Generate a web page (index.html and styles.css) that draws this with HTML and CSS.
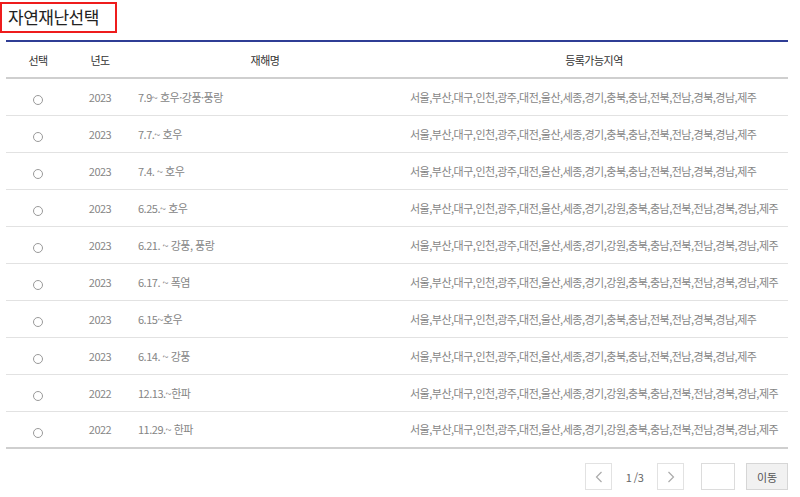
FILE: index.html
```html
<!DOCTYPE html>
<html lang="ko">
<head>
<meta charset="utf-8">
<link rel="stylesheet" href="styles.css">
</head>
<body>
<div class="page">
  <h2 class="title">자연재난선택</h2>
  <table class="grid">
    <colgroup>
      <col class="c-sel"><col class="c-year"><col class="c-name"><col class="c-area">
    </colgroup>
    <thead>
      <tr><th>선택</th><th>년도</th><th>재해명</th><th>등록가능지역</th></tr>
    </thead>
    <tbody>
      <tr><td><span class="radio"></span></td><td>2023</td><td class="name">7.9~ 호우·강풍·풍랑</td><td class="area">서울,부산,대구,인천,광주,대전,울산,세종,경기,충북,충남,전북,전남,경북,경남,제주</td></tr>
      <tr><td><span class="radio"></span></td><td>2023</td><td class="name">7.7.~ 호우</td><td class="area">서울,부산,대구,인천,광주,대전,울산,세종,경기,충북,충남,전북,전남,경북,경남,제주</td></tr>
      <tr><td><span class="radio"></span></td><td>2023</td><td class="name">7.4. ~ 호우</td><td class="area">서울,부산,대구,인천,광주,대전,울산,세종,경기,충북,충남,전북,전남,경북,경남,제주</td></tr>
      <tr><td><span class="radio"></span></td><td>2023</td><td class="name">6.25.~ 호우</td><td class="area">서울,부산,대구,인천,광주,대전,울산,세종,경기,강원,충북,충남,전북,전남,경북,경남,제주</td></tr>
      <tr><td><span class="radio"></span></td><td>2023</td><td class="name">6.21. ~ 강풍, 풍랑</td><td class="area">서울,부산,대구,인천,광주,대전,울산,세종,경기,강원,충북,충남,전북,전남,경북,경남,제주</td></tr>
      <tr><td><span class="radio"></span></td><td>2023</td><td class="name">6.17. ~ 폭염</td><td class="area">서울,부산,대구,인천,광주,대전,울산,세종,경기,강원,충북,충남,전북,전남,경북,경남,제주</td></tr>
      <tr><td><span class="radio"></span></td><td>2023</td><td class="name">6.15~호우</td><td class="area">서울,부산,대구,인천,광주,대전,울산,세종,경기,충북,충남,전북,전남,경북,경남,제주</td></tr>
      <tr><td><span class="radio"></span></td><td>2023</td><td class="name">6.14. ~ 강풍</td><td class="area">서울,부산,대구,인천,광주,대전,울산,세종,경기,충북,충남,전북,전남,경북,경남,제주</td></tr>
      <tr><td><span class="radio"></span></td><td>2022</td><td class="name">12.13.~한파</td><td class="area">서울,부산,대구,인천,광주,대전,울산,세종,경기,강원,충북,충남,전북,전남,경북,경남,제주</td></tr>
      <tr><td><span class="radio"></span></td><td>2022</td><td class="name">11.29.~ 한파</td><td class="area">서울,부산,대구,인천,광주,대전,울산,세종,경기,강원,충북,충남,전북,전남,경북,경남,제주</td></tr>
    </tbody>
  </table>
  <div class="pager">
    <button class="pg-btn" type="button" aria-label="이전">
      <svg width="8" height="12" viewBox="0 0 8 12"><path d="M6.5 1 L1.5 6 L6.5 11" fill="none" stroke="#aaa" stroke-width="1.2"/></svg>
    </button>
    <span class="pg-num">1 /3</span>
    <button class="pg-btn" type="button" aria-label="다음">
      <svg width="8" height="12" viewBox="0 0 8 12"><path d="M1.5 1 L6.5 6 L1.5 11" fill="none" stroke="#aaa" stroke-width="1.2"/></svg>
    </button>
    <input class="pg-input" type="text">
    <button class="pg-go" type="button">이동</button>
  </div>
</div>
</body>
</html>
```

FILE: styles.css
```css
* { box-sizing: border-box; }
html, body { margin: 0; padding: 0; background: #fff; }
body {
  font-family: "Noto Sans CJK KR", "Noto Sans", sans-serif;
  color: #333;
}
.page { width: 800px; padding-top: 2px; }
.title {
  display: inline-block;
  margin: 0;
  height: 31px;
  padding: 0 16px 0 6px;
  border: 2px solid #ee1c1c;
  font-size: 17px;
  font-weight: 400;
  line-height: 25px;
  color: #222;
  letter-spacing: -0.5px;
}
.grid {
  margin: 7px 0 0 6px;
  width: 782px;
  border-collapse: collapse;
  table-layout: fixed;
  border-top: 2px solid #2f3d95;
  font-size: 11px;
  letter-spacing: -0.5px;
}
.c-sel { width: 64px; }
.c-year { width: 60px; }
.c-name { width: 270px; }
.c-area { width: 388px; }
.grid th {
  height: 37px;
  font-weight: 400;
  color: #333;
  text-align: center;
  border-bottom: 2px solid #cfcfcf;
  padding: 0;
}
.grid td {
  height: 37px;
  padding: 0;
  text-align: center;
  color: #858585;
  border-bottom: 1px solid #e2e2e2;
  white-space: nowrap;
}
.grid tbody tr:last-child td { border-bottom: 2px solid #cfcfcf; }
.grid td.name { text-align: left; padding-left: 8px; }
.grid td.area { text-align: left; padding-left: 10px; }
.radio {
  display: inline-block;
  width: 10px;
  height: 10px;
  border: 1px solid #9a9a9a;
  border-radius: 50%;
  vertical-align: middle;
  margin-top: 4px;
}
.pager {
  display: flex;
  justify-content: flex-end;
  align-items: center;
  margin-top: 14px;
  width: 788px;
}
.pg-btn {
  width: 27px;
  height: 27px;
  border: 1px solid #e2e2e2;
  background: #fff;
  padding: 0;
  display: flex;
  align-items: center;
  justify-content: center;
}
.pg-num {
  font-size: 11px;
  color: #666;
  width: 45px;
  text-align: center;
  letter-spacing: -0.5px;
}
.pg-input {
  width: 34px;
  height: 27px;
  margin-left: 17px;
  border: 1px solid #dcdcdc;
  padding: 0;
}
.pg-go {
  width: 42px;
  height: 27px;
  margin-left: 11px;
  border: 1px solid #d6d6d6;
  background: #f1f1f1;
  font-family: "Noto Sans CJK KR", sans-serif;
  font-size: 11px;
  color: #555;
  padding: 0;
}
```
